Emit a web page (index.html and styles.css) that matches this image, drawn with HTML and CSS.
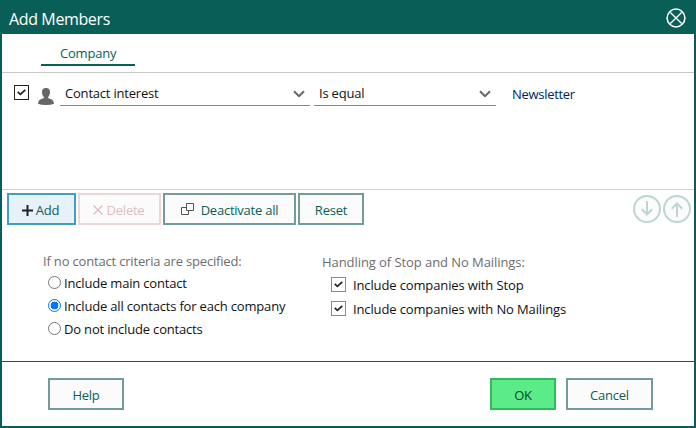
FILE: index.html
```html
<!DOCTYPE html>
<html lang="en">
<head>
<meta charset="utf-8">
<title>Add Members</title>
<link rel="stylesheet" href="styles.css">
</head>
<body>
<div class="dialog">
  <header class="titlebar">
    <h1 class="title">Add Members</h1>
    <svg class="close" width="20" height="20" viewBox="0 0 20 20" fill="none" stroke="#fff"><circle cx="10" cy="10" r="8.9" stroke-width="1.5"/><path d="M4.4 4.4 15.6 15.6M15.6 4.4 4.4 15.6" stroke-width="1.4"/></svg>
  </header>
  <nav class="tabs"><div class="tab"><span>Company</span></div></nav>
  <section class="criteria">
    <span class="check check-dark"><svg width="9" height="7" viewBox="0 0 9 7"><path d="M.7 2.8 3.4 5.4 8.3.8"/></svg></span>
    <svg class="person" width="16" height="17" viewBox="0 0 16 17"><path fill="#666" d="M8 0C5.400 0 3.900 1.500 4 4C4 6.300 4.800 8 6 9.200V10L2.200 11.500Q.2 12.400 0 15.800Q3 17 8 17T16 15.800Q15.800 12.400 13.800 11.500L10 10V9.200C11.200 8 12 6.300 12 4C12.100 1.500 10.600 0 8 0Z"/></svg>
    <div class="select field"><span>Contact interest</span><svg width="12" height="8" viewBox="0 0 12 8"><path d="M1 1.200 6 6.200 11 1.200"/></svg></div>
    <div class="select operator"><span>Is equal</span><svg width="12" height="8" viewBox="0 0 12 8"><path d="M1 1.200 6 6.200 11 1.200"/></svg></div>
    <span class="value">Newsletter</span>
  </section>
  <section class="toolbar">
    <button class="btn add"><svg width="11" height="11" viewBox="0 0 11 11"><path d="M5.500 0V11M0 5.500H11" stroke="#222" stroke-width="2"/></svg><span>Add</span></button>
    <button class="btn delete"><svg width="10" height="10" viewBox="0 0 10 10"><path d="M.5.5 9.500 9.500M9.500.5.5 9.500" stroke="#dfbcbc" stroke-width="1.200"/></svg><span>Delete</span></button>
    <button class="btn deactivate"><svg width="13" height="12" viewBox="0 0 13 12" fill="#fbfbfb" stroke="#555"><path d="M.5 4.500H7.500V11.500H.5Z"/><path d="M5.500.5H12.500V7.500H5.500Z"/></svg><span>Deactivate all</span></button>
    <button class="btn reset"><span>Reset</span></button>
    <div class="arrows">
      <svg width="28" height="28" viewBox="0 0 28 28"><circle cx="14" cy="14" r="13"/><path d="M14 6V19.500M8.800 14.300 14 19.500 19.200 14.300"/></svg>
      <svg width="28" height="28" viewBox="0 0 28 28"><circle cx="14" cy="14" r="13"/><path d="M14 22V8.500M8.800 13.700 14 8.500 19.200 13.700"/></svg>
    </div>
  </section>
  <section class="options">
    <div class="contacts">
      <p class="legend">If no contact criteria are specified:</p>
      <label class="radio"><i class="dot"></i><span>Include main contact</span></label>
      <label class="radio"><i class="dot on"></i><span>Include all contacts for each company</span></label>
      <label class="radio"><i class="dot"></i><span>Do not include contacts</span></label>
    </div>
    <div class="handling">
      <p class="legend">Handling of Stop and No Mailings:</p>
      <label class="option"><span class="check"><svg width="9" height="7" viewBox="0 0 9 7"><path d="M.7 2.800 3.400 5.400 8.300.8"/></svg></span><span>Include companies with Stop</span></label>
      <label class="option"><span class="check"><svg width="9" height="7" viewBox="0 0 9 7"><path d="M.7 2.800 3.400 5.400 8.300.8"/></svg></span><span>Include companies with No Mailings</span></label>
    </div>
  </section>
  <footer class="footer">
    <button class="btn help"><span>Help</span></button>
    <button class="btn ok"><span>OK</span></button>
    <button class="btn cancel"><span>Cancel</span></button>
  </footer>
</div>
</body>
</html>
```
FILE: styles.css
```css
* { box-sizing: border-box; }
body { margin: 0; background: #fff; font: 13px/18px "Open Sans", "Noto Sans", sans-serif; color: #111; }
svg { display: block; flex: none; }
span { white-space: nowrap; }
.dialog { width: 696px; height: 428px; border: 2px solid #0a5e58; border-top: 0; display: flex; flex-direction: column; }
.titlebar { height: 34px; flex: none; background: #0a5e58; display: flex; justify-content: space-between; padding: 8px 8px 0 7px; }
.title { margin: 0; color: #fff; font-size: 16px; font-weight: 400; line-height: 23px; letter-spacing: -.37px; }
.tabs { height: 39px; flex: none; border-bottom: 1px solid #c6c6c6; padding: 10px 0 0 39px; }
.tab { width: 94px; height: 22px; border-bottom: 2px solid #0a5e58; color: #0a5e58; padding-left: 19px; line-height: 19px; letter-spacing: -.2px; }
.criteria { height: 117px; flex: none; border-bottom: 1px solid #d0d0d0; display: flex; align-items: flex-start; padding: 12px 0 0 12px; }
.check { width: 15px; height: 15px; border: 1px solid #888; display: flex; align-items: flex-start; justify-content: center; padding-top: 3px; flex: none; }
.check path { fill: none; stroke: #222; stroke-width: 1.7; }
.check-dark { border-color: #222; }
.person { margin: 3px 0 0 9px; }
.select { height: 21px; border-bottom: 1px solid #888; display: flex; justify-content: space-between; padding: 0 5px; line-height: 17px; letter-spacing: -.2px; }
.select path { fill: none; stroke: #666; stroke-width: 2; }
.select svg { margin-top: 5px; }
.field { width: 250px; margin-left: 6px; }
.operator { width: 182px; margin-left: 4px; }
.value { color: #00245c; margin-left: 16px; line-height: 19px; letter-spacing: -.3px; }
.toolbar { height: 35px; flex: none; display: flex; gap: 2px; padding: 3px 3px 0 5px; }
.btn { height: 32px; border: 2px solid #729c9a; background: #fbfbfb; color: #0a5e58; font: inherit; letter-spacing: -.23px; padding: 0; display: flex; align-items: center; justify-content: center; flex: none; }
.btn span { position: relative; top: 1px; }
.add { width: 69px; border-color: #3d9fc4; background: #e6f1f8; gap: 3px; padding-right: 2px; }
.add svg { margin-top: 2px; }
.delete { width: 83px; border-color: #ecd7d7; color: #dfbcbc; gap: 4px; padding-right: 2px; }
.delete svg { margin-top: 2px; }
.deactivate { width: 133px; gap: 7px; }
.deactivate svg { margin-bottom: 1px; }
.reset { width: 66px; }
.arrows { display: flex; gap: 2px; margin: 2px 0 0 auto; }
.arrows svg { fill: #fbfbfb; stroke: #bfd5d3; stroke-width: 2; }
.arrows path { fill: none; }
.options { height: 136px; flex: none; display: grid; grid-template-columns: 279px 1fr; padding: 27px 0 0 41px; letter-spacing: -.18px; }
.legend { margin: 0; color: #6d6d6d; line-height: 18px; white-space: nowrap; }
.radio { display: flex; align-items: center; height: 23px; padding-left: 5px; gap: 3px; }
.contacts .legend { margin-bottom: 1px; }
.dot { width: 13px; height: 13px; border: 1px solid #777; border-radius: 50%; flex: none; }
.dot.on { border-color: #0075ff; background: radial-gradient(circle, #0075ff 3.6px, #fff 4.200px); }
.handling { padding-top: 1px; letter-spacing: -.13px; }
.handling .legend { margin-bottom: 5px; letter-spacing: -.07px; }
.option { display: flex; height: 24px; gap: 7px; padding-left: 9px; }
.option .check { margin-top: 1px; }
.option > span:last-child { line-height: 19px; }
.footer { flex: 1; border-top: 1px solid #0a5e58; display: flex; padding: 16px 41px 0 46px; }
.help { width: 76px; }
.ok { width: 66px; margin-left: auto; margin-right: 10px; border-color: #2dbe5c; background: #5beb89; color: #10401f; }
.cancel { width: 87px; }
```
